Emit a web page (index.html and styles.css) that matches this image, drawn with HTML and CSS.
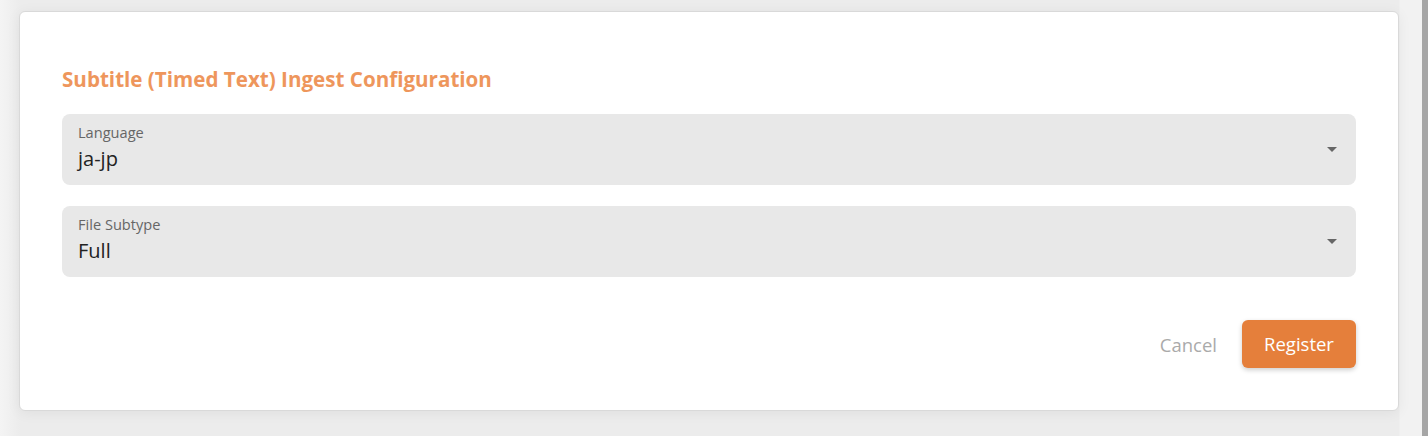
FILE: index.html
```html
<!DOCTYPE html>
<html>
<head>
<meta charset="utf-8">
<link rel="stylesheet" href="styles.css">
</head>
<body>
<div class="page">
  <main class="stage">
    <section class="card">
      <h2 class="title">Subtitle (Timed Text) Ingest Configuration</h2>
      <div class="field">
        <div class="field-text">
          <span class="label">Language</span>
          <span class="value">ja-jp</span>
        </div>
        <svg class="caret" width="10" height="5" viewBox="0 0 10 5"><path d="M0 0h10L5 5z" fill="#666"/></svg>
      </div>
      <div class="field">
        <div class="field-text">
          <span class="label">File Subtype</span>
          <span class="value">Full</span>
        </div>
        <svg class="caret" width="10" height="5" viewBox="0 0 10 5"><path d="M0 0h10L5 5z" fill="#666"/></svg>
      </div>
      <div class="actions">
        <button class="btn-cancel">Cancel</button>
        <button class="btn-primary">Register</button>
      </div>
    </section>
  </main>
  <div class="rail"></div>
</div>
</body>
</html>
```
FILE: styles.css
```css
* { box-sizing: border-box; }
html, body { margin: 0; height: 100%; }
body {
  font-family: "Open Sans", "Noto Sans", sans-serif;
  background: #ededed;
  overflow: hidden;
}
.page {
  display: flex;
  width: 1428px;
  height: 436px;
}
.stage {
  flex: 1;
  padding: 11px 23px 0 19px;
  background: linear-gradient(90deg, #f4f4f4 0, #ececec 20px, #ececec 1399px, #f2f2f2 1400px);
}
.rail {
  width: 6px;
  background: #a6a6a6;
}
.card {
  width: 1380px;
  height: 400px;
  background: #fff;
  border: 1px solid #d9d9d9;
  border-radius: 6px;
  box-shadow: 0 2px 14px rgba(0,0,0,0.06);
  padding: 53px 42px 0 42px;
  display: flex;
  flex-direction: column;
}
.title {
  margin: 0 0 21px 0;
  font-size: 20.6px;
  line-height: 28px;
  font-weight: 700;
  color: #ee965c;
}
.field {
  height: 71px;
  flex: none;
  background: #e8e8e8;
  border-radius: 8px;
  padding: 0 19px 0 16px;
  display: flex;
  align-items: center;
  justify-content: space-between;
  margin-bottom: 21px;
}
.field-text {
  display: flex;
  flex-direction: column;
  align-self: flex-start;
  padding-top: 8px;
  gap: 3px;
}
.label {
  font-size: 14.6px;
  line-height: 20px;
  color: #666;
}
.value {
  font-size: 20px;
  line-height: 27px;
  color: #222;
}
.actions {
  display: flex;
  justify-content: flex-end;
  align-items: center;
  gap: 25px;
  margin-top: 22px;
}
button {
  font-family: inherit;
  font-size: 18.5px;
  border: 0;
  cursor: pointer;
}
.btn-cancel {
  background: none;
  color: #aaa;
  padding: 0;
}
.btn-primary {
  width: 114px;
  height: 48px;
  background: #e57f3b;
  color: #fff;
  border-radius: 6px;
  box-shadow: 0 2px 5px rgba(0,0,0,0.2);
  padding: 0 0 2px 0;
}
```
